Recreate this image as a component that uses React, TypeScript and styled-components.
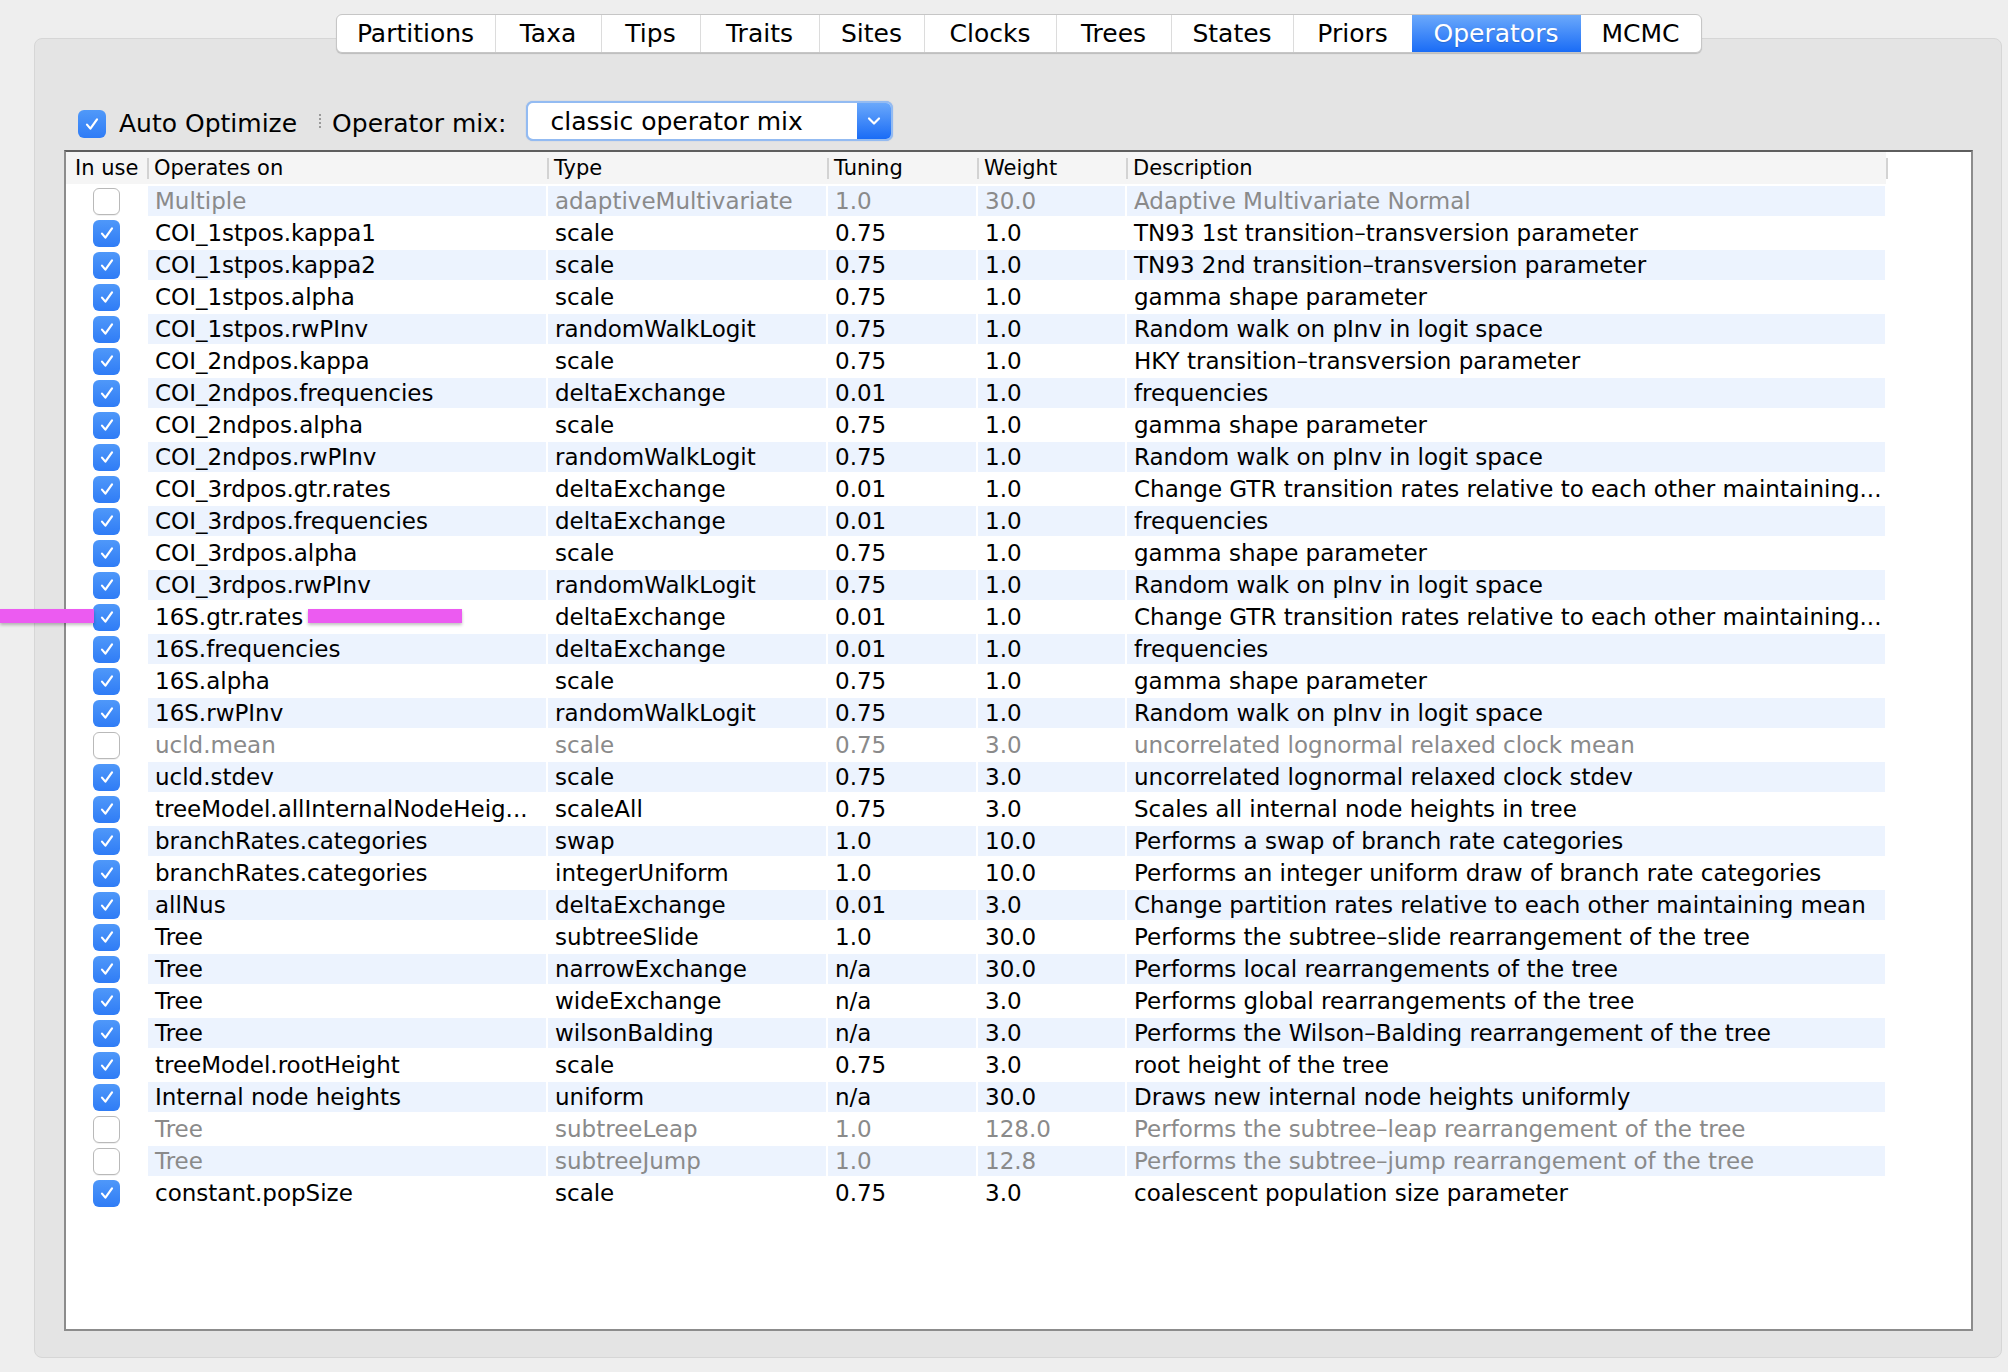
import React from "react";
import styled, { createGlobalStyle } from "styled-components";

const Global = createGlobalStyle`
  html, body { margin: 0; padding: 0; background: #eeeeee; }
  body { font-family: "DejaVu Sans", "Liberation Sans", sans-serif; }
`;

const COLS = "81px 400px 280px 150px 149px 760px";

const Page = styled.div`
  position: relative;
  width: 2008px;
  height: 1372px;
  box-sizing: border-box;
  padding: 38px 6px 14px 34px;
  background: #eeeeee;
  overflow: hidden;
`;

const Panel = styled.div`
  box-sizing: border-box;
  width: 1968px;
  height: 1320px;
  background: #e4e4e4;
  border: 1px solid #d6d6d6;
  border-radius: 8px;
  padding: 0 28px 26px 29px;
  display: flex;
  flex-direction: column;
`;

const TabRow = styled.div`
  margin-top: -25px;
  height: 39px;
  display: flex;
  justify-content: center;
`;

const TabBar = styled.div`
  display: flex;
  height: 39px;
  box-sizing: border-box;
  background: #ffffff;
  border: 1px solid #c6c6c6;
  border-radius: 6px;
  box-shadow: 0 1px 1px rgba(0, 0, 0, 0.18);
  overflow: hidden;
`;

const Tab = styled.div<{ $active?: boolean; $first?: boolean; $w: number }>`
  box-sizing: border-box;
  width: ${(p) => p.$w}px;
  display: flex;
  align-items: center;
  justify-content: center;
  font-size: 25px;
  color: ${(p) => (p.$active ? "#ffffff" : "#000000")};
  background: ${(p) =>
    p.$active ? "linear-gradient(#6ba9fb, #1a6cf6)" : "transparent"};
  border-left: ${(p) => (p.$first || p.$active ? "none" : "1px solid #dcdcdc")};
  text-shadow: ${(p) => (p.$active ? "0 1px 1px rgba(0,0,0,0.15)" : "none")};
  white-space: nowrap;
`;

const Toolbar = styled.div`
  margin-top: 48px;
  height: 40px;
  display: flex;
  align-items: center;
  padding-left: 14px;
`;

const BigCheck = styled.span`
  width: 28px;
  height: 28px;
  margin-top: 6px;
  border-radius: 6px;
  background: linear-gradient(#5099f9, #2f7cf6);
  display: inline-flex;
  align-items: center;
  justify-content: center;
  flex: none;
`;

const ToolLabel = styled.span`
  font-size: 25px;
  color: #000;
  white-space: nowrap;
  padding-top: 5px;
`;

const AutoLabel = styled(ToolLabel)`
  margin-left: 13px;
`;

const DotSep = styled.span`
  width: 0;
  height: 14px;
  border-left: 2px dotted #9a9a9a;
  margin: 0 11px 0 22px;
`;

const Combo = styled.div`
  margin-left: 20px;
  width: 367px;
  height: 40px;
  box-sizing: border-box;
  display: flex;
  border: 2px solid #93bbf2;
  border-radius: 7px;
  background: #fff;
  overflow: hidden;
  box-shadow: 0 0 1px rgba(60, 120, 220, 0.5);
`;

const ComboText = styled.div`
  flex: 1;
  display: flex;
  align-items: center;
  padding-left: 22px;
  font-size: 25px;
  color: #000;
`;

const ComboArrow = styled.div`
  width: 34px;
  display: flex;
  align-items: center;
  justify-content: center;
  background: linear-gradient(#6aa8fb, #1a6cf6);
`;

const Table = styled.div`
  margin-top: 9px;
  flex: 1;
  background: #ffffff;
  border: 2px solid #8c8c8c;
  border-top-color: #5e5e5e;
  overflow: hidden;
`;

const HeaderWrap = styled.div`
  display: flex;
`;

const HeaderRow = styled.div`
  display: grid;
  grid-template-columns: ${COLS};
  width: 1820px;
  height: 32px;
  background: #f5f5f5;
  margin-bottom: 1px;
`;

const HeaderCell = styled.div<{ $divider?: boolean; $pad?: number }>`
  position: relative;
  display: flex;
  align-items: center;
  padding-left: ${(p) => p.$pad ?? 7}px;
  font-size: 21px;
  color: #000;
  white-space: nowrap;
  overflow: hidden;
  &::before {
    content: "";
    display: ${(p) => (p.$divider ? "block" : "none")};
    position: absolute;
    left: 0;
    top: 6px;
    width: 2px;
    height: 21px;
    background: #d3d3d3;
  }
`;

const HeaderEnd = styled.div`
  width: 2px;
  height: 21px;
  margin-top: 6px;
  background: #d3d3d3;
`;

const Row = styled.div`
  display: grid;
  grid-template-columns: ${COLS};
  width: 1820px;
  height: 32px;
`;

const CheckCell = styled.div`
  display: flex;
  align-items: center;
  justify-content: center;
`;

const Cell = styled.div<{ $stripe: boolean; $dim: boolean }>`
  margin: 1px;
  height: 30px;
  box-sizing: border-box;
  padding-left: 7px;
  line-height: 30px;
  font-size: 23px;
  color: ${(p) => (p.$dim ? "#8a8a8a" : "#000000")};
  background: ${(p) => (p.$stripe ? "#ecf3fe" : "transparent")};
  white-space: nowrap;
  overflow: hidden;
`;

const Box = styled.span<{ $checked: boolean }>`
  width: 27px;
  height: 27px;
  box-sizing: border-box;
  border-radius: 6px;
  display: inline-flex;
  align-items: center;
  justify-content: center;
  background: ${(p) =>
    p.$checked ? "linear-gradient(#4f98f9, #2f7cf6)" : "#ffffff"};
  border: ${(p) => (p.$checked ? "none" : "1px solid #b9b9b9")};
  box-shadow: ${(p) => (p.$checked ? "none" : "0 1px 0 rgba(0,0,0,0.06)")};
`;

const Mark = styled.div<{ $left: number; $width: number }>`
  position: absolute;
  top: 609px;
  left: ${(p) => p.$left}px;
  width: ${(p) => p.$width}px;
  height: 14px;
  background: #ec5bf1;
  box-shadow: 0 2px 3px rgba(0, 0, 0, 0.25);
  z-index: 3;
`;

const Tick = () => (
  <svg width="18" height="18" viewBox="0 0 18 18">
    <path
      d="M4 9.6 L7.4 13.6 L14 4.4"
      fill="none"
      stroke="#ffffff"
      strokeWidth="2.2"
      strokeLinecap="round"
      strokeLinejoin="round"
    />
  </svg>
);

const Chevron = () => (
  <svg width="16" height="12" viewBox="0 0 16 12">
    <path
      d="M3 3.5 L8 8.5 L13 3.5"
      fill="none"
      stroke="#ffffff"
      strokeWidth="2.2"
      strokeLinecap="round"
      strokeLinejoin="round"
    />
  </svg>
);

type Op = [boolean, string, string, string, string, string];

const ops: Op[] = [
  [false, "Multiple", "adaptiveMultivariate", "1.0", "30.0", "Adaptive Multivariate Normal"],
  [true, "COI_1stpos.kappa1", "scale", "0.75", "1.0", "TN93 1st transition–transversion parameter"],
  [true, "COI_1stpos.kappa2", "scale", "0.75", "1.0", "TN93 2nd transition–transversion parameter"],
  [true, "COI_1stpos.alpha", "scale", "0.75", "1.0", "gamma shape parameter"],
  [true, "COI_1stpos.rwPInv", "randomWalkLogit", "0.75", "1.0", "Random walk on pInv in logit space"],
  [true, "COI_2ndpos.kappa", "scale", "0.75", "1.0", "HKY transition–transversion parameter"],
  [true, "COI_2ndpos.frequencies", "deltaExchange", "0.01", "1.0", "frequencies"],
  [true, "COI_2ndpos.alpha", "scale", "0.75", "1.0", "gamma shape parameter"],
  [true, "COI_2ndpos.rwPInv", "randomWalkLogit", "0.75", "1.0", "Random walk on pInv in logit space"],
  [true, "COI_3rdpos.gtr.rates", "deltaExchange", "0.01", "1.0", "Change GTR transition rates relative to each other maintaining..."],
  [true, "COI_3rdpos.frequencies", "deltaExchange", "0.01", "1.0", "frequencies"],
  [true, "COI_3rdpos.alpha", "scale", "0.75", "1.0", "gamma shape parameter"],
  [true, "COI_3rdpos.rwPInv", "randomWalkLogit", "0.75", "1.0", "Random walk on pInv in logit space"],
  [true, "16S.gtr.rates", "deltaExchange", "0.01", "1.0", "Change GTR transition rates relative to each other maintaining..."],
  [true, "16S.frequencies", "deltaExchange", "0.01", "1.0", "frequencies"],
  [true, "16S.alpha", "scale", "0.75", "1.0", "gamma shape parameter"],
  [true, "16S.rwPInv", "randomWalkLogit", "0.75", "1.0", "Random walk on pInv in logit space"],
  [false, "ucld.mean", "scale", "0.75", "3.0", "uncorrelated lognormal relaxed clock mean"],
  [true, "ucld.stdev", "scale", "0.75", "3.0", "uncorrelated lognormal relaxed clock stdev"],
  [true, "treeModel.allInternalNodeHeig...", "scaleAll", "0.75", "3.0", "Scales all internal node heights in tree"],
  [true, "branchRates.categories", "swap", "1.0", "10.0", "Performs a swap of branch rate categories"],
  [true, "branchRates.categories", "integerUniform", "1.0", "10.0", "Performs an integer uniform draw of branch rate categories"],
  [true, "allNus", "deltaExchange", "0.01", "3.0", "Change partition rates relative to each other maintaining mean"],
  [true, "Tree", "subtreeSlide", "1.0", "30.0", "Performs the subtree–slide rearrangement of the tree"],
  [true, "Tree", "narrowExchange", "n/a", "30.0", "Performs local rearrangements of the tree"],
  [true, "Tree", "wideExchange", "n/a", "3.0", "Performs global rearrangements of the tree"],
  [true, "Tree", "wilsonBalding", "n/a", "3.0", "Performs the Wilson–Balding rearrangement of the tree"],
  [true, "treeModel.rootHeight", "scale", "0.75", "3.0", "root height of the tree"],
  [true, "Internal node heights", "uniform", "n/a", "30.0", "Draws new internal node heights uniformly"],
  [false, "Tree", "subtreeLeap", "1.0", "128.0", "Performs the subtree–leap rearrangement of the tree"],
  [false, "Tree", "subtreeJump", "1.0", "12.8", "Performs the subtree–jump rearrangement of the tree"],
  [true, "constant.popSize", "scale", "0.75", "3.0", "coalescent population size parameter"],
];

const tabs: [string, number][] = [
  ["Partitions", 158],
  ["Taxa", 106],
  ["Tips", 99],
  ["Traits", 119],
  ["Sites", 105],
  ["Clocks", 132],
  ["Trees", 115],
  ["States", 122],
  ["Priors", 119],
  ["Operators", 169],
  ["MCMC", 120],
];

export default function App() {
  return (
    <>
      <Global />
      <Page>
        <Panel>
          <TabRow>
            <TabBar>
              {tabs.map(([t, w], i) => (
                <Tab
                  key={t}
                  $w={w}
                  $first={i === 0 || tabs[i - 1][0] === "Operators"}
                  $active={t === "Operators"}
                >
                  {t}
                </Tab>
              ))}
            </TabBar>
          </TabRow>
          <Toolbar>
            <BigCheck>
              <Tick />
            </BigCheck>
            <AutoLabel>Auto Optimize</AutoLabel>
            <DotSep />
            <ToolLabel>Operator mix:</ToolLabel>
            <Combo>
              <ComboText>classic operator mix</ComboText>
              <ComboArrow>
                <Chevron />
              </ComboArrow>
            </Combo>
          </Toolbar>
          <Table>
            <HeaderWrap>
              <HeaderRow>
                <HeaderCell $pad={9}>In use</HeaderCell>
                <HeaderCell $divider>Operates on</HeaderCell>
                <HeaderCell $divider>Type</HeaderCell>
                <HeaderCell $divider>Tuning</HeaderCell>
                <HeaderCell $divider>Weight</HeaderCell>
                <HeaderCell $divider>Description</HeaderCell>
              </HeaderRow>
              <HeaderEnd />
            </HeaderWrap>
            {ops.map((o, i) => {
              const stripe = i % 2 === 0;
              const dim = !o[0];
              return (
                <Row key={i}>
                  <CheckCell>
                    <Box $checked={o[0]}>{o[0] && <Tick />}</Box>
                  </CheckCell>
                  {o.slice(1).map((v, j) => (
                    <Cell key={j} $stripe={stripe} $dim={dim}>
                      {v}
                    </Cell>
                  ))}
                </Row>
              );
            })}
          </Table>
        </Panel>
        <Mark $left={0} $width={94} />
        <Mark $left={308} $width={154} />
      </Page>
    </>
  );
}
